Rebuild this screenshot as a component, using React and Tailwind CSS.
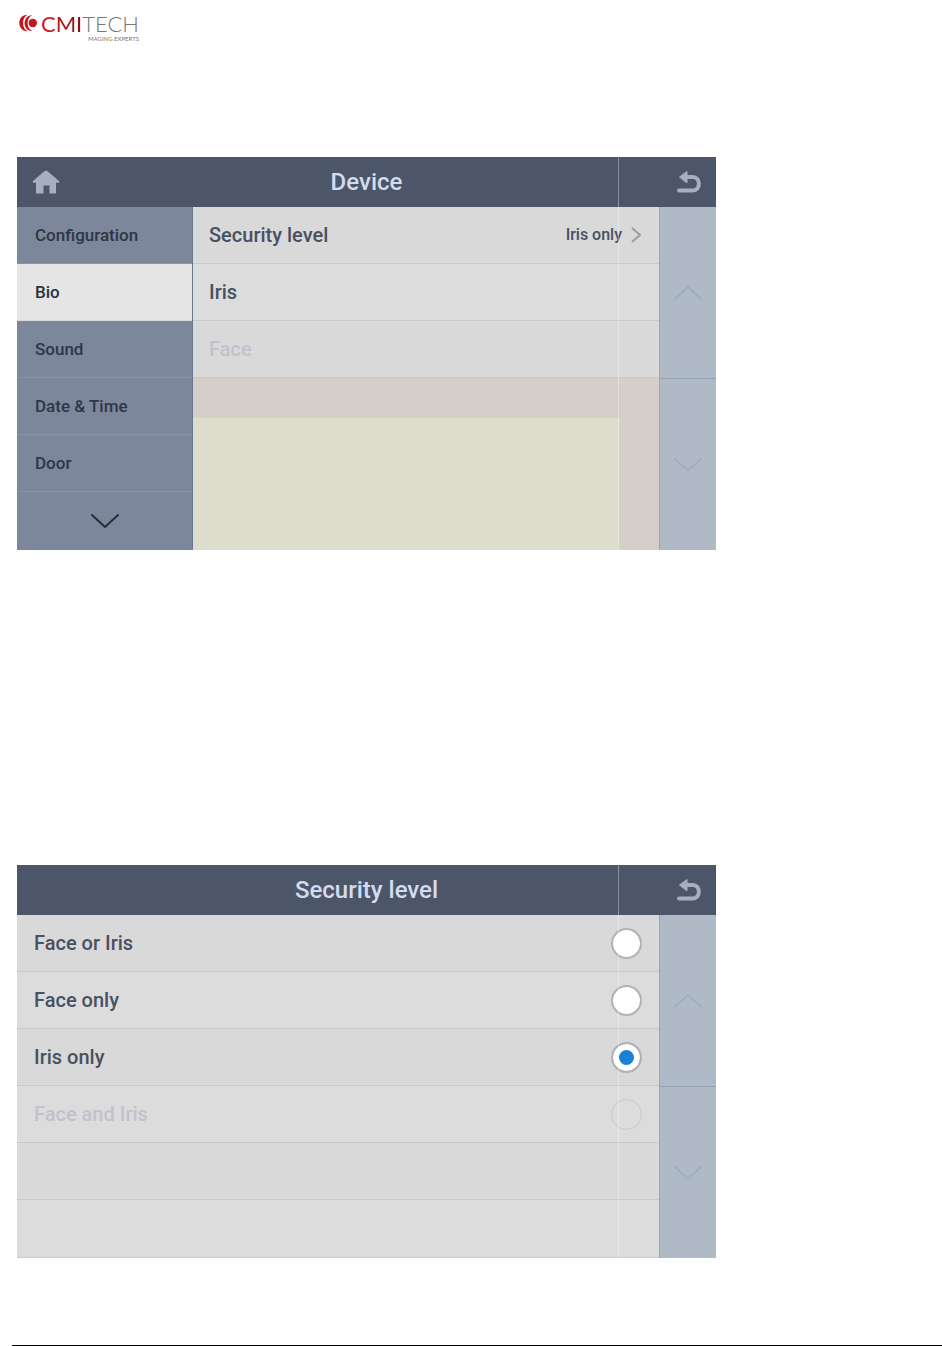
import React, { useState } from "react";

const menuItems = ["Configuration", "Bio", "Sound", "Date & Time", "Door"];

const settings = [
    { name: "Security level", value: "Iris only" },
    { name: "Iris" },
    { name: "Face", disabled: true },
];

const levels = [
    { id: "face-or-iris", name: "Face or Iris" },
    { id: "face-only", name: "Face only" },
    { id: "iris-only", name: "Iris only" },
    { id: "face-and-iris", name: "Face and Iris", disabled: true },
];

const Chevron = ({ up }) => (
    <svg viewBox="0 0 28 16" className="w-7 h-4" fill="none" stroke="currentColor" strokeWidth="2" strokeLinecap="round" strokeLinejoin="round">
        <path d={up ? "M1 14L14 2L27 14" : "M1 2L14 14L27 2"} />
    </svg>
);

const HomeIcon = () => (
    <svg viewBox="0 0 28 24" className="w-7 h-6" fill="currentColor">
        <path d="M14 0.5L12 1.6L0.5 11.5L1 12.7H4V23.5H11.5V15.5H17.5V23.5H24V12.7H27L27.5 11.5L16 1.6Z" />
    </svg>
);

const BackIcon = () => (
    <svg viewBox="0 0 24 22" className="w-6 h-[22px]" fill="none">
        <path d="M9 6H15.5C24 6 24 19.5 15.5 19.5H2" stroke="currentColor" strokeWidth="4" strokeLinecap="round" />
        <path d="M2.5 6L10 0.5V12Z" fill="currentColor" stroke="currentColor" strokeLinejoin="round" />
    </svg>
);

const Logo = () => (
    <div className="flex items-start gap-1">
        <svg viewBox="0 0 18 18" className="w-[18px] h-[18px] mt-[2px]" fill="#c4161c">
            <circle cx="13.8" cy="9" r="4.2" />
            <path d="M13.5 1.2C3 0.5 3 17.5 13.5 16.8C7 15 7 3 13.5 1.2Z" />
            <path d="M8.5 0.8C-2.5 1 -2.5 17 8.5 17.2C2.500 14 2.500 4 8.5 0.8Z" />
        </svg>
        <div className="flex flex-col items-end font-['Lato',sans-serif]">
            <div className="text-[22px] leading-6 text-[#77787b] font-light">
                <span className="font-normal bg-linear-to-r from-[#e0181e] to-[#8d0d12] bg-clip-text text-transparent">CMI</span>
                TECH
            </div>
            <div className="text-[6px] leading-[6px] text-[#77787b]">MAGING EXPERTS</div>
        </div>
    </div>
);

const Screen = ({ title, home, children }) => (
    <section className="relative w-full max-w-[699px]">
        <header className="h-[50px] grid grid-cols-[60px_1fr_60px] items-center px-[15px] bg-[#4c5668] text-[#a5afc0]">
            <div className="flex">
                {home && (
                    <button aria-label="Home">
                        <HomeIcon />
                    </button>
                )}
            </div>
            <h2 className="text-center text-2xl font-medium text-[#d3dcef]">{title}</h2>
            <button aria-label="Back" className="justify-self-end">
                <BackIcon />
            </button>
        </header>
        <div className="flex">
            {children}
            <div className="w-[57px] shrink-0 flex flex-col bg-[#b0bac7] text-[#a2aebe] border-l border-[#9aa5b6]">
                <button aria-label="Scroll up" className="flex-1 flex items-center justify-center border-b border-[#97a3b4]">
                    <Chevron up />
                </button>
                <button aria-label="Scroll down" className="flex-1 flex items-center justify-center">
                    <Chevron />
                </button>
            </div>
        </div>
        {/* thin light seam running down the display */}
        <div className="absolute inset-y-0 right-[97px] w-px bg-white/35 pointer-events-none"></div>
    </section>
);

export default function App() {
    const [tab, setTab] = useState("Bio");
    const [level, setLevel] = useState("iris-only");

    return (
        <div className="bg-white font-['Roboto',sans-serif] pl-3">
            <div className="pl-[5px]">
                <div className="h-[157px] pt-3 pl-[2px]">
                    <Logo />
                </div>

                <Screen title="Device" home>
                    <nav className="w-44 shrink-0 bg-[#7d879b] border-r border-[#6b7590]">
                        {menuItems.map((item) => (
                            <button
                                key={item}
                                onClick={() => setTab(item)}
                                className={`block w-full h-[57px] pt-[2px] pl-[18px] text-left text-[17px] font-medium border-b ${
                                    tab === item
                                        ? "bg-[#e5e5e5] text-[#2b303b] border-[#d8d8d8]"
                                        : "text-[#2d3648] border-[#8b95a8]"
                                }`}
                            >
                                {item}
                            </button>
                        ))}
                        <button aria-label="More" className="w-full h-[58px] flex items-center justify-center text-[#272d39]">
                            <Chevron />
                        </button>
                    </nav>
                    <div className="flex-1 flex flex-col bg-[#d4cfc9]">
                        {settings.map((item) => (
                            <button
                                key={item.name}
                                disabled={item.disabled}
                                className="h-[57px] shrink-0 pl-4 pr-[17px] flex items-center justify-between border-b border-[#c8c9ca] bg-[#d9d9d9] even:bg-[#dcdcdc] text-[#485061] disabled:text-[#c1c2cb] font-medium"
                            >
                                <span className="text-xl">{item.name}</span>
                                {item.value && (
                                    <span className="flex items-center gap-2 text-base">
                                        {item.value}
                                        <svg viewBox="0 0 12 16" className="w-3 h-4" fill="none" stroke="#979ca6" strokeWidth="2">
                                            <path d="M2 1L10 8L2 15" />
                                        </svg>
                                    </span>
                                )}
                            </button>
                        ))}
                        <div className="flex-1 mt-10 mr-10 bg-[#dcddca]"></div>
                    </div>
                </Screen>

                <div className="h-[315px]"></div>

                <Screen title="Security level">
                    <div className="flex-1">
                        {levels.map((item) => (
                            <label
                                key={item.id}
                                className={`h-[57px] pl-[17px] pr-[17px] flex items-center justify-between border-b border-[#c8c9ca] bg-[#d9d9d9] even:bg-[#dcdcdc] text-xl font-medium ${
                                    item.disabled ? "text-[#c1c2cb]" : "text-[#485061]"
                                }`}
                            >
                                {item.name}
                                <input
                                    type="radio"
                                    name="level"
                                    value={item.id}
                                    disabled={item.disabled}
                                    checked={level === item.id}
                                    onChange={() => setLevel(item.id)}
                                    className="appearance-none w-[31px] h-[31px] rounded-full border-2 border-[#b3b3b3] bg-white bg-clip-padding checked:bg-[#1b80d8] checked:shadow-[inset_0_0_0_6px_#ffffff] disabled:border disabled:border-[#c5c9d0] disabled:bg-transparent"
                                />
                            </label>
                        ))}
                        <div className="h-[57px] bg-[#d9d9d9] border-b border-[#c8c9ca]"></div>
                        <div className="h-[58px] bg-[#dcdcdc] border-b border-[#c8c9ca]"></div>
                    </div>
                </Screen>
            </div>
            <footer className="mt-[87px] border-t border-black"></footer>
        </div>
    );
}
